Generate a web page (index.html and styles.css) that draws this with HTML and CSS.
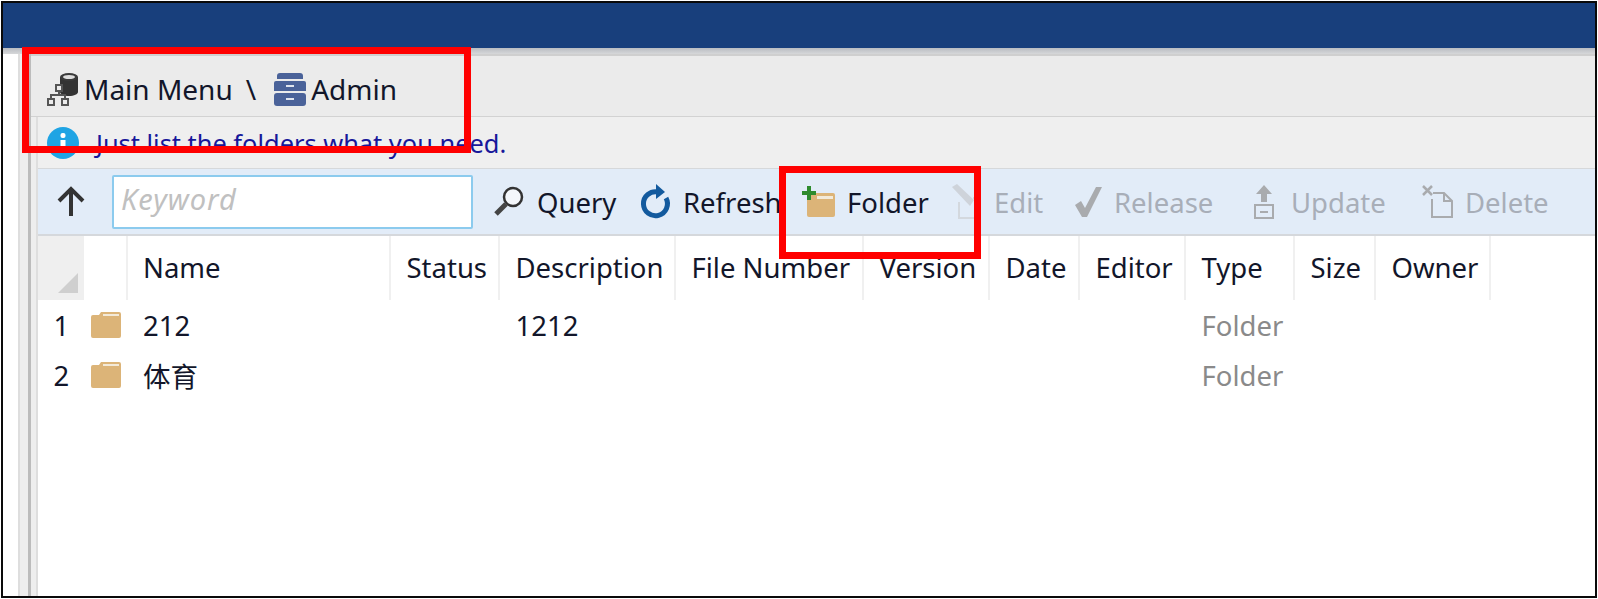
FILE: index.html
```html
<!DOCTYPE html>
<html lang="en">
<head>
<meta charset="utf-8">
<title>Admin</title>
<link rel="stylesheet" href="styles.css">
</head>
<body>
<div class="frame">
  <div class="topbar"></div>
  <div class="topstrip"></div>
  <div class="body">
    <div class="gutter"></div>
    <div class="rail"></div>
    <div class="main">
      <div class="crumbs">
        <svg class="crumb-icon" width="33" height="34" viewBox="0 0 33 34"><path d="M14 5v15c0 2 4 4 9 4s9-2 9-4V5z" fill="#333"/><ellipse cx="23" cy="5" rx="9" ry="4" fill="#3a3a3a"/><ellipse cx="23" cy="5" rx="6" ry="2" fill="#ddd"/><g fill="none" stroke="#555" stroke-width="2"><rect x="10" y="13" width="6" height="6" fill="#ebebeb"/><rect x="2" y="27" width="6" height="6"/><rect x="16" y="27" width="6" height="6"/><path d="M13 19v4M5 27v-4h14v4"/></g></svg>
        <span class="crumb-text">Main Menu</span>
        <span class="crumb-sep">\</span>
        <svg class="crumb-icon" width="32" height="33" viewBox="0 0 32 33"><path d="M6 0h20q3 0 3 3v3H3V3q0-3 3-3z" fill="#4a6299"/><path d="M2 8h28q2 0 2 2v8H0v-8q0-2 2-2z" fill="#4a6299"/><rect y="20" width="32" height="13" rx="3" fill="#4a6299"/><rect x="12" y="12" width="8" height="2" fill="#dfe4ee"/><rect x="12" y="25" width="8" height="2" fill="#dfe4ee"/></svg>
        <span class="crumb-text">Admin</span>
      </div>
      <div class="notice">
        <svg width="32" height="32" viewBox="0 0 32 32"><circle cx="16" cy="16" r="16" fill="#1fa4e4"/><rect x="13.500" y="6" width="5" height="5" rx="2" fill="#fff"/><rect x="13.500" y="13" width="5" height="12" fill="#fff"/></svg>
        <span class="notice-text">Just list the folders what you need.</span>
      </div>
      <div class="toolbar">
        <div class="up"><svg width="30" height="32" viewBox="0 0 30 32"><path d="M15 30V4M3 15 15 3l12 12" fill="none" stroke="#333" stroke-width="4"/></svg></div>
        <div class="keyword">Keyword</div>
        <div class="tool">
          <svg class="tool-icon" width="34" height="34" viewBox="0 0 34 34"><circle cx="21" cy="12" r="9" fill="#f4f7fb" stroke="#333" stroke-width="2.500"/><path d="M14 19 4 29" stroke="#444" stroke-width="5"/></svg>
          <span class="tool-label">Query</span>
        </div>
        <div class="tool">
          <svg class="tool-icon" width="32" height="36" viewBox="0 0 32 36"><path d="M18 8A12 12 0 1 0 26 14" fill="none" stroke="#135a9e" stroke-width="5"/><path d="M16 0v15l9-7z" fill="#135a9e"/></svg>
          <span class="tool-label">Refresh</span>
        </div>
        <div class="tool">
          <svg class="tool-icon" width="34" height="32" viewBox="0 0 34 32"><rect x="5" y="7" width="28" height="24" rx="2" fill="#dcb478"/><rect x="15" y="10" width="16" height="3" fill="#f3ead9"/><path d="M5 0h4v5h5v4H9v5H5V9H0V5h5z" fill="#2e8b2e"/></svg>
          <span class="tool-label">Folder</span>
        </div>
        <div class="tool tool-off">
          <svg class="tool-icon" width="34" height="36" viewBox="0 0 34 36"><path d="M10 18v16h20V14h-6" fill="none" stroke="#d3d8de" stroke-width="2"/><path d="M3 3 8 0l17 16-4 6z" fill="#ced3da"/></svg>
          <span class="tool-label">Edit</span>
        </div>
        <div class="tool tool-off">
          <svg class="tool-icon" width="30" height="32" viewBox="0 0 30 32"><path d="M2 19l6-4 4 7L23 1h6L14 31H9z" fill="#a9abae"/></svg>
          <span class="tool-label">Release</span>
        </div>
        <div class="tool tool-off tool-update">
          <svg class="tool-icon" width="24" height="36" viewBox="0 0 24 36"><path d="M12 1 20 10H15V18H9V10H4z" fill="#a9abae"/><rect x="3" y="21" width="18" height="13" fill="none" stroke="#a9abae" stroke-width="2"/><rect x="8" y="27" width="8" height="2" fill="#a9abae"/></svg>
          <span class="tool-label">Update</span>
        </div>
        <div class="tool tool-off">
          <svg class="tool-icon" width="32" height="34" viewBox="0 0 32 34"><path d="M1 1l9 9M10 1l-9 9" stroke="#a9abae" stroke-width="2.500"/><path d="M11 8h11l8 8v16H10V14" fill="none" stroke="#a9abae" stroke-width="2"/><path d="M22 8v8h8" fill="none" stroke="#a9abae" stroke-width="2"/></svg>
          <span class="tool-label">Delete</span>
        </div>
      </div>
      <div class="grid-head">
        <div class="corner"><svg width="20" height="20" viewBox="0 0 20 20"><path d="M20 0v20H0z" fill="#cfcfcf"/></svg></div>
        <div class="hcell hcell-plain"></div>
        <div class="hcell col-name">Name</div>
        <div class="hcell">Status</div>
        <div class="hcell">Description</div>
        <div class="hcell">File Number</div>
        <div class="hcell">Version</div>
        <div class="hcell">Date</div>
        <div class="hcell">Editor</div>
        <div class="hcell">Type</div>
        <div class="hcell">Size</div>
        <div class="hcell">Owner</div>
      </div>
      <div class="grid-row">
        <div class="cell cell-num">1</div>
        <div class="cell cell-icon"><svg width="30" height="26" viewBox="0 0 30 26"><path d="M0 5q0-2 2-2h6l2-3h18q2 0 2 2v22q0 2-2 2H2q-2 0-2-2z" fill="#dcb478"/><rect x="12" y="2" width="16" height="2" fill="#f3ead9"/></svg></div>
        <div class="cell col-name">212</div>
        <div class="cell"></div>
        <div class="cell">1212</div>
        <div class="cell"></div>
        <div class="cell"></div>
        <div class="cell"></div>
        <div class="cell"></div>
        <div class="cell cell-type">Folder</div>
        <div class="cell"></div>
        <div class="cell"></div>
      </div>
      <div class="grid-row">
        <div class="cell cell-num">2</div>
        <div class="cell cell-icon"><svg width="30" height="26" viewBox="0 0 30 26"><path d="M0 5q0-2 2-2h6l2-3h18q2 0 2 2v22q0 2-2 2H2q-2 0-2-2z" fill="#dcb478"/><rect x="12" y="2" width="16" height="2" fill="#f3ead9"/></svg></div>
        <div class="cell col-name">体育</div>
        <div class="cell"></div>
        <div class="cell"></div>
        <div class="cell"></div>
        <div class="cell"></div>
        <div class="cell"></div>
        <div class="cell"></div>
        <div class="cell cell-type">Folder</div>
        <div class="cell"></div>
        <div class="cell"></div>
      </div>
    </div>
  </div>
  <div class="mark mark-crumbs"></div>
  <div class="mark mark-folder"></div>
</div>
</body>
</html>
```
FILE: styles.css
```css
* { box-sizing: border-box; }
html, body { margin: 0; padding: 0; background: #fff; }
body {
  width: 1598px;
  height: 599px;
  overflow: hidden;
  padding: 1px;
  font-family: "Noto Sans", "Noto Sans CJK SC", sans-serif;
  font-size: 27.5px;
  color: #12162a;
}
.frame {
  position: relative;
  width: 1596px;
  height: 597px;
  border: 2px solid #0a0a0a;
  overflow: hidden;
  display: flex;
  flex-direction: column;
}
.topbar { height: 45px; flex: none; background: #183f7c; }
.topstrip { height: 6px; flex: none; background: linear-gradient(#b9bcc2, #d6d7d9); }
.body { flex: 1; display: flex; min-height: 0; }
.gutter { width: 15px; flex: none; background: #fff; }
.rail {
  width: 20px;
  flex: none;
  background: linear-gradient(90deg, #dedede 0, #dedede 2px, #eeeeee 2px, #eeeeee 10px, #bcbcbc 10px, #bcbcbc 13px, #eeeeee 13px, #eeeeee 18px, #dedede 18px);
}
.main { flex: 1; min-width: 0; background: #fff; }
.crumbs {
  height: 63px;
  display: flex;
  align-items: center;
  margin-left: -7px;
  padding: 6px 0 0 15px;
  background: #ebebeb;
  border-top: 2px solid #cfcfcf;
  border-bottom: 1px solid #d2d2d2;
  font-size: 28px;
}
.crumb-text { margin-left: 5px; }
.crumb-sep { margin: 0 18px 0 13px; }
.crumb-icon { flex: none; }
.notice {
  height: 52px;
  display: flex;
  align-items: center;
  gap: 17px;
  padding-left: 9px;
  background: #efefef;
  border-bottom: 1px solid #d6d8da;
}
.notice-text { color: #17179a; font-size: 25.4px; }
.toolbar {
  height: 67px;
  display: grid;
  grid-template-columns: 74px 361px 148px 162px 147px 124px 179px 170px 1fr;
  align-items: center;
  background: #e2ecf8;
  border-bottom: 2px solid #d5d8dc;
}
.up { display: flex; justify-content: center; padding-right: 9px; }
.keyword {
  height: 54px;
  display: flex;
  align-items: center;
  padding: 0 0 6px 7px;
  background: #fff;
  border: 2px solid #8ccbee;
  border-radius: 2px;
  font-style: italic;
  font-size: 29px;
  letter-spacing: 1px;
  color: #c0c0c0;
}
.tool { display: flex; align-items: center; gap: 11px; padding-left: 19px; }
.tool-label { padding-top: 2px; }
.tool-update { gap: 15px; }
.tool-icon { flex: none; }
.tool-off { color: #a8aeb8; }
.grid-head, .grid-row {
  display: grid;
  grid-template-columns: 46px 44px 263px 109px 176px 188px 126px 90px 106px 109px 81px 115px;
}
.grid-head { height: 64px; }
.corner {
  display: flex;
  align-items: flex-end;
  justify-content: flex-end;
  padding: 0 6px 7px 0;
  background: #efefef;
}
.hcell {
  display: flex;
  align-items: center;
  padding: 0 0 2px 15.5px;
  border-right: 2px solid #f0f0f0;
}
.hcell-plain { padding: 0; }
.grid-row { height: 50px; }
.cell { display: flex; align-items: center; padding-left: 15.5px; }
.cell-icon { padding-left: 7px; }
.cell-type { color: #8a8a8a; }
.hcell.col-name, .cell.col-name { padding-left: 15px; }
.mark { position: absolute; border: 7px solid #ff0000; }
.mark-crumbs { left: 19px; top: 44px; width: 449px; height: 106px; }
.mark-folder { left: 776px; top: 163px; width: 202px; height: 93px; }
```
